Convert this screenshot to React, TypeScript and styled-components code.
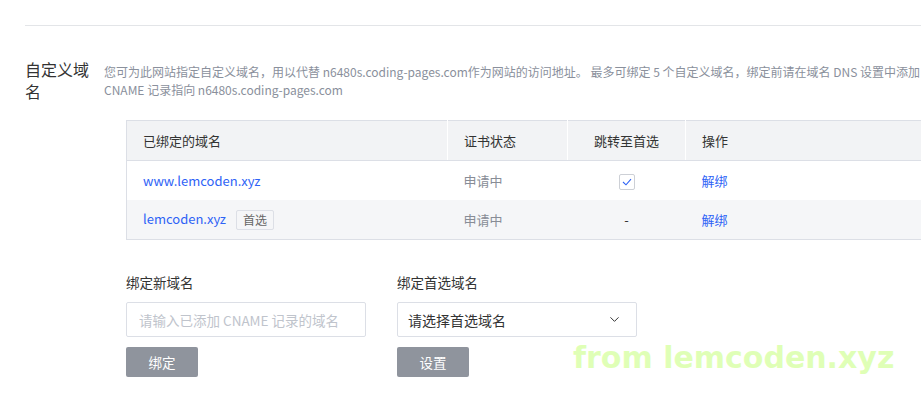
import React from "react";
import styled, { createGlobalStyle } from "styled-components";
import { ChevronDown } from "lucide-react";

const GlobalStyle = createGlobalStyle`
  html, body {
    margin: 0;
    padding: 0;
    background: #fff;
    overflow: hidden;
  }
  body {
    font-family: "Noto Sans CJK SC", "Noto Sans", sans-serif;
    color: #333;
  }
`;

const Page = styled.div`
  position: relative;
  width: 1000px;
  height: 406px;
  padding: 25px 0 0 25px;
  box-sizing: border-box;
`;

const Divider = styled.div`
  border-top: 1px solid #e3e5e8;
`;

const Section = styled.div`
  display: flex;
  margin-top: 32px;
`;

const Heading = styled.div`
  width: 79px;
  flex-shrink: 0;
  font-size: 16px;
  line-height: 22px;
  color: #333;
  padding-right: 12px;
  box-sizing: border-box;
`;

const Body = styled.div`
  flex: 1;
  display: flex;
  flex-direction: column;
`;

const Desc = styled.div`
  width: 818px;
  font-size: 12px;
  line-height: 18px;
  color: #8a909c;
  margin-top: 5px;
`;

const Table = styled.table`
  margin: 21px 0 0 22px;
  width: 860px;
  border-collapse: collapse;
  table-layout: fixed;
  font-size: 13px;
  border: 1px solid #dcdfe6;
  border-right: none;
`;

const HeadCell = styled.th<{ $center?: boolean }>`
  height: 39px;
  background: #f2f3f5;
  font-weight: normal;
  color: #333;
  text-align: ${(p) => (p.$center ? "center" : "left")};
  padding: 0 16px;
  border-bottom: 1px solid #dcdfe6;
  border-right: 1px solid #fff;
`;

const Row = styled.tr<{ $alt?: boolean }>`
  background: ${(p) => (p.$alt ? "#f5f6f8" : "#fff")};
`;

const Cell = styled.td<{ $center?: boolean; $muted?: boolean }>`
  height: 39px;
  padding: 0 16px;
  text-align: ${(p) => (p.$center ? "center" : "left")};
  color: ${(p) => (p.$muted ? "#888d96" : "#333")};
`;

const Link = styled.a`
  color: #2e63f6;
  text-decoration: none;
`;

const Tag = styled.span`
  display: inline-block;
  margin-left: 10px;
  padding: 0 6px;
  height: 18px;
  line-height: 18px;
  font-size: 12px;
  color: #666;
  background: #f5f6f8;
  border: 1px solid #dcdfe6;
  border-radius: 2px;
  vertical-align: middle;
`;

const CheckBox = styled.span`
  display: inline-flex;
  align-items: center;
  justify-content: center;
  width: 14px;
  height: 14px;
  border: 1px solid #cdd0d6;
  border-radius: 2px;
  background: #fff;
  vertical-align: middle;
`;

const Form = styled.div`
  display: flex;
  gap: 31px;
  margin: 32px 0 0 22px;
`;

const Field = styled.div`
  width: 240px;
  display: flex;
  flex-direction: column;
`;

const Label = styled.div`
  font-size: 13.5px;
  line-height: 20px;
  color: #333;
  margin-bottom: 10px;
`;

const Input = styled.input`
  box-sizing: border-box;
  width: 240px;
  height: 35px;
  border: 1px solid #dcdfe6;
  border-radius: 2px;
  padding: 0 12px;
  font-family: inherit;
  font-size: 13.5px;
  outline: none;
  &::placeholder {
    color: #c0c4cc;
  }
`;

const Select = styled.div`
  box-sizing: border-box;
  width: 240px;
  height: 35px;
  border: 1px solid #dcdfe6;
  border-radius: 2px;
  padding: 0 14px 0 10px;
  display: flex;
  align-items: center;
  justify-content: space-between;
  font-size: 14px;
  color: #333;
`;

const Button = styled.button`
  margin-top: 10px;
  width: 72px;
  height: 30px;
  border: none;
  border-radius: 2px;
  background: #8f949d;
  color: #fff;
  font-family: inherit;
  font-size: 13.5px;
  cursor: not-allowed;
`;

const Watermark = styled.div`
  position: absolute;
  left: 573px;
  top: 340px;
  font-family: "DejaVu Sans", sans-serif;
  font-weight: bold;
  font-size: 30px;
  color: #dfffb6;
  white-space: nowrap;
  pointer-events: none;
`;

const domains = [
  { name: "www.lemcoden.xyz", primary: false, redirect: true },
  { name: "lemcoden.xyz", primary: true, redirect: false },
];

export default function App() {
  return (
    <Page>
      <GlobalStyle />
      <Divider />
      <Section>
        <Heading>自定义域名</Heading>
        <Body>
          <Desc>
            您可为此网站指定自定义域名，用以代替 n6480s.coding-pages.com作为网站的访问地址。 最多可绑定 5
            个自定义域名，绑定前请在域名 DNS 设置中添加 CNAME 记录指向 n6480s.coding-pages.com
          </Desc>
          <Table>
            <colgroup>
              <col style={{ width: 321 }} />
              <col style={{ width: 120 }} />
              <col style={{ width: 118 }} />
              <col />
            </colgroup>
            <thead>
              <tr>
                <HeadCell>已绑定的域名</HeadCell>
                <HeadCell>证书状态</HeadCell>
                <HeadCell $center>跳转至首选</HeadCell>
                <HeadCell>操作</HeadCell>
              </tr>
            </thead>
            <tbody>
              {domains.map((d, i) => (
                <Row key={d.name} $alt={i % 2 === 1}>
                  <Cell>
                    <Link>{d.name}</Link>
                    {d.primary && <Tag>首选</Tag>}
                  </Cell>
                  <Cell $muted>申请中</Cell>
                  <Cell $center>
                    {d.redirect ? (
                      <CheckBox>
                        <svg width="10" height="8" viewBox="0 0 10 8">
                          <path d="M1 4 L4 6.8 L9 1.2" fill="none" stroke="#2e63f6" strokeWidth="1.1" />
                        </svg>
                      </CheckBox>
                    ) : (
                      "-"
                    )}
                  </Cell>
                  <Cell>
                    <Link>解绑</Link>
                  </Cell>
                </Row>
              ))}
            </tbody>
          </Table>
          <Form>
            <Field>
              <Label>绑定新域名</Label>
              <Input placeholder="请输入已添加 CNAME 记录的域名" />
              <Button>绑定</Button>
            </Field>
            <Field>
              <Label>绑定首选域名</Label>
              <Select>
                <span>请选择首选域名</span>
                <ChevronDown size={15} strokeWidth={1.6} color="#333" />
              </Select>
              <Button>设置</Button>
            </Field>
          </Form>
        </Body>
      </Section>
      <Watermark>from lemcoden.xyz</Watermark>
    </Page>
  );
}
